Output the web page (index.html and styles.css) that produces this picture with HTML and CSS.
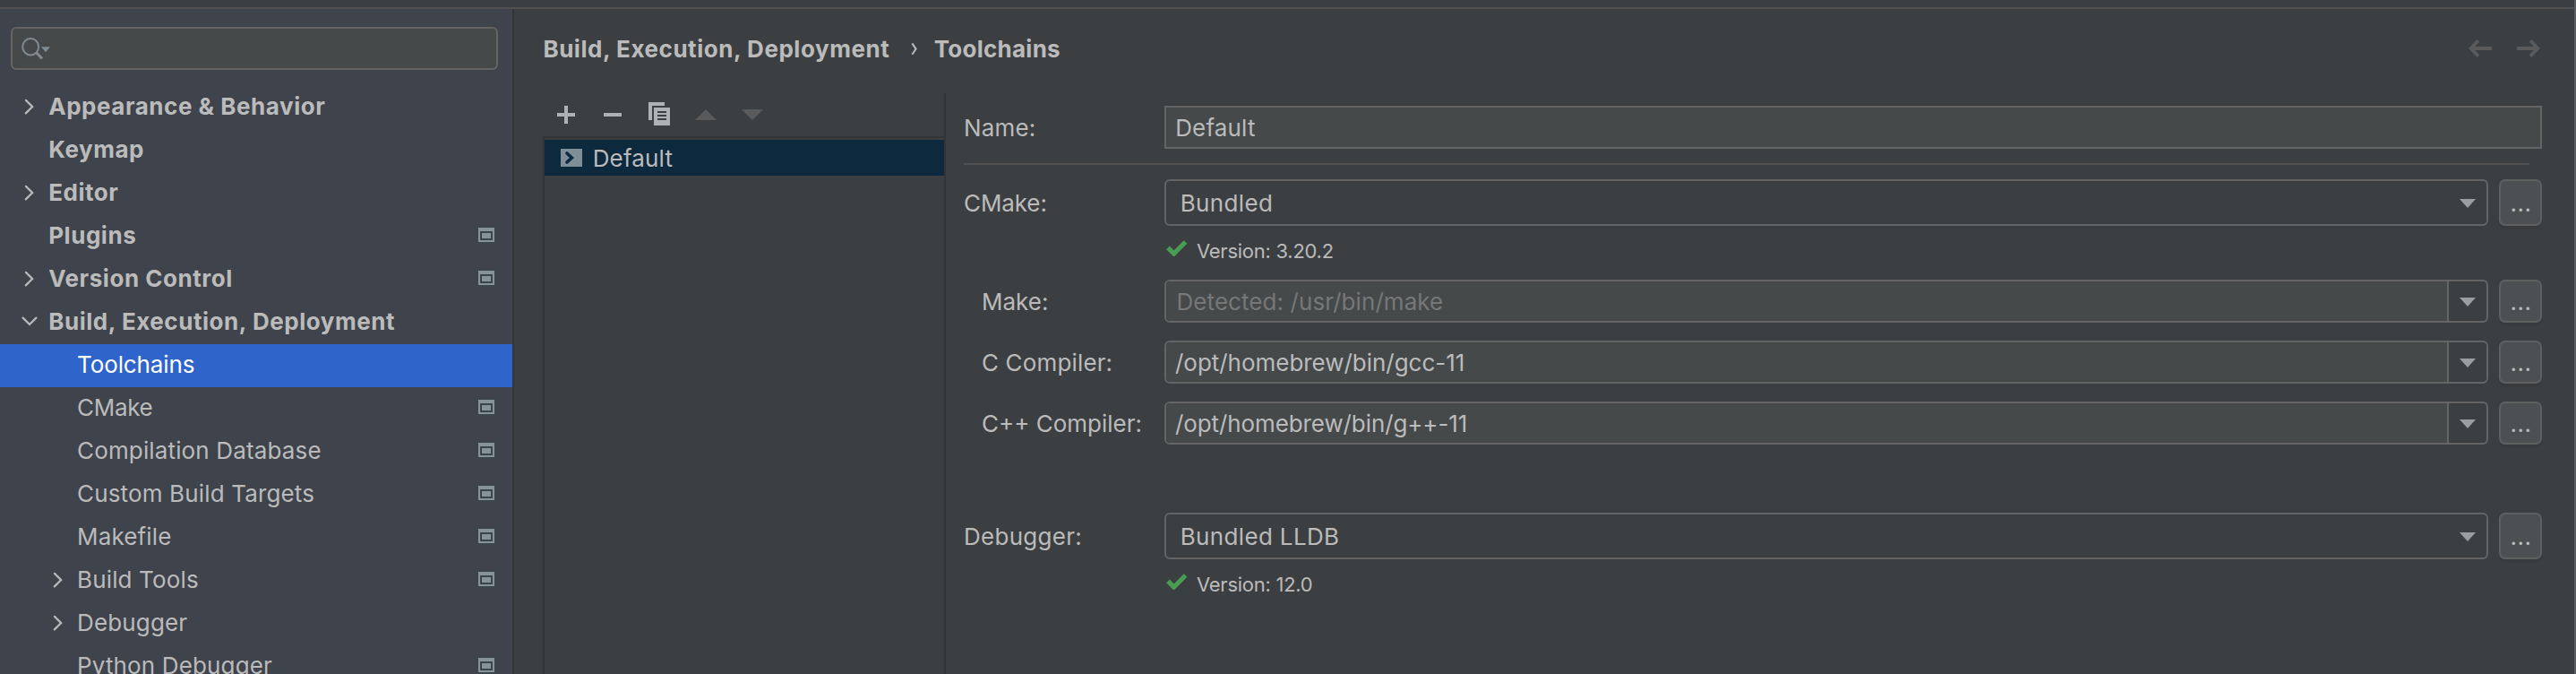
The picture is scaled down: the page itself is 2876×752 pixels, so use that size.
FILE: index.html
```html
<!DOCTYPE html>
<html lang="en">
<head>
<meta charset="utf-8">
<title>Toolchains</title>
<link rel="stylesheet" href="styles.css">
</head>
<body>
<svg class="defs" width="0" height="0">
  <symbol id="right" viewBox="0 0 12 18"><path d="M1.8 1.8 9.2 9.1 1.8 16.4" fill="none" stroke="#bbb" stroke-width="2.2" stroke-linecap="round"/></symbol>
  <symbol id="down" viewBox="0 0 18 12"><path d="M1.6 1.6 9 9 16.4 1.6" fill="none" stroke="#bbb" stroke-width="2.2" stroke-linecap="round"/></symbol>
  <symbol id="project" viewBox="0 0 18 16"><path fill="#87939a" fill-rule="evenodd" d="M0 0H18V16H0zM2 4V14H16V4z"/><path fill="#87939a" d="M4 6H14V12H4z"/></symbol>
  <symbol id="tri" viewBox="0 0 18 10"><path d="M0 0H18L9 10z" fill="#9a9da1"/></symbol>
  <symbol id="check" viewBox="0 0 24 18"><path d="M2 8.4 8.6 15 21.6 2" fill="none" stroke="#499c54" stroke-width="5.2"/></symbol>
</svg>
<div class="titlebar"></div>
<div class="window">
  <nav class="sidebar">
    <div class="search">
      <svg width="34" height="26" viewBox="0 0 34 26"><ellipse cx="10.2" cy="10.2" rx="9" ry="9.2" fill="none" stroke="#7f8b91" stroke-width="2"/><path d="M16.6 16.8 23 23.4" stroke="#7f8b91" stroke-width="3"/><path d="M22 10.2H32L27 16.2z" fill="#7f8b91"/></svg>
    </div>
    <ul class="tree">
      <li class="top"><svg class="chev" width="12" height="18"><use href="#right"/></svg><span>Appearance &amp; Behavior</span></li>
      <li class="top"><span>Keymap</span></li>
      <li class="top"><svg class="chev" width="12" height="18"><use href="#right"/></svg><span>Editor</span></li>
      <li class="top"><span>Plugins</span><svg class="proj" width="18" height="16"><use href="#project"/></svg></li>
      <li class="top"><svg class="chev" width="12" height="18"><use href="#right"/></svg><span>Version Control</span><svg class="proj" width="18" height="16"><use href="#project"/></svg></li>
      <li class="top"><svg class="chev open" width="18" height="12"><use href="#down"/></svg><span>Build, Execution, Deployment</span></li>
      <li class="selected"><span class="tight">Toolchains</span></li>
      <li><span class="tighter">CMake</span><svg class="proj" width="18" height="16"><use href="#project"/></svg></li>
      <li><span>Compilation Database</span><svg class="proj" width="18" height="16"><use href="#project"/></svg></li>
      <li><span>Custom Build Targets</span><svg class="proj" width="18" height="16"><use href="#project"/></svg></li>
      <li><span>Makefile</span><svg class="proj" width="18" height="16"><use href="#project"/></svg></li>
      <li><svg class="chev" width="12" height="18"><use href="#right"/></svg><span>Build Tools</span><svg class="proj" width="18" height="16"><use href="#project"/></svg></li>
      <li><svg class="chev" width="12" height="18"><use href="#right"/></svg><span>Debugger</span></li>
      <li><span>Python Debugger</span><svg class="proj" width="18" height="16"><use href="#project"/></svg></li>
    </ul>
  </nav>
  <main class="content">
    <header class="header">
      <span class="crumb">Build, Execution, Deployment</span>
      <svg class="crumb-sep" width="8" height="16" viewBox="0 0 8 16"><path d="M1.4 1.4 5.6 7.6 1.4 13.8" fill="none" stroke="#bbb" stroke-width="2"/></svg>
      <span class="crumb last">Toolchains</span>
      <div class="nav-arrows">
        <svg width="26" height="20" viewBox="0 0 26 20"><path d="M26 10H3M11 1.4 2.6 10 11 18.6" fill="none" stroke="#5a5a5a" stroke-width="3.8"/></svg>
        <svg width="26" height="20" viewBox="0 0 26 20"><path d="M0 10H23M15 1.4 23.4 10 15 18.6" fill="none" stroke="#5a5a5a" stroke-width="3.8"/></svg>
      </div>
    </header>
    <div class="panes">
      <section class="toolchains">
        <div class="toolbar">
          <svg width="240" height="28" viewBox="0 0 240 28">
            <path fill="#afb1b3" d="M8 4h4v8h8v4h-8v8H8v-8H0v-4h8zM52 12h20v4H52z"/>
            <path fill="#afb1b3" d="M102 0h18v4h-14v16h-4z"/>
            <path fill="#afb1b3" fill-rule="evenodd" d="M108 6h18v20h-18zM112 10v2h10v-2zM112 14v2h10v-2zM112 18v2h10v-2z"/>
            <path fill="#5a5a5a" d="M154 20h24l-12-12zM206 8h24l-12 12z"/>
          </svg>
        </div>
        <div class="list">
          <div class="item">
            <svg width="24" height="20" viewBox="0 0 24 20"><path fill="#7f8f99" d="M0 0h24v20H0z"/><path d="M7 5 12.4 10 7 15" fill="none" stroke="#0d293e" stroke-width="3.6" stroke-linecap="round"/></svg>
            <span>Default</span>
          </div>
        </div>
      </section>
      <section class="form">
        <div class="row"><label>Name:</label><div class="input">Default</div></div>
        <hr>
        <div class="row tall"><label class="tight">CMake:</label><div class="select">Bundled<svg width="18" height="10"><use href="#tri"/></svg></div><button>...</button></div>
        <div class="status"><svg width="24" height="18"><use href="#check"/></svg><span>Version: 3.20.2</span></div>
        <div class="row sub"><label class="none">Make:</label><div class="combo hint"><span>Detected: /usr/bin/make</span><i><svg width="18" height="10"><use href="#tri"/></svg></i></div><button>...</button></div>
        <div class="row sub"><label>C Compiler:</label><div class="combo"><span>/opt/homebrew/bin/gcc-11</span><i><svg width="18" height="10"><use href="#tri"/></svg></i></div><button>...</button></div>
        <div class="row sub"><label class="none">C++ Compiler:</label><div class="combo"><span class="tight">/opt/homebrew/bin/g++-11</span><i><svg width="18" height="10"><use href="#tri"/></svg></i></div><button>...</button></div>
        <div class="row tall debugger"><label class="wide">Debugger:</label><div class="select">Bundled LLDB<svg width="18" height="10"><use href="#tri"/></svg></div><button>...</button></div>
        <div class="status"><svg width="24" height="18"><use href="#check"/></svg><span>Version: 12.0</span></div>
      </section>
    </div>
  </main>
</div>
</body>
</html>
```
FILE: styles.css
```css
* { box-sizing: border-box; }

body {
  margin: 0;
  width: 2876px;
  height: 752px;
  overflow: hidden;
  display: flex;
  flex-direction: column;
  background: #3c3f41;
  border-right: 2px solid #5c5d5e;
  color: #bbb;
  font: 26px/32px Inter, sans-serif;
  letter-spacing: 0.15px;
  white-space: nowrap;
}

svg { display: block; flex: none; }
.defs { position: absolute; }

.titlebar { flex: none; height: 10px; border-bottom: 2px solid #515151; }

.window { flex: 1; min-height: 0; display: flex; }

/* Settings tree */
.sidebar {
  flex: none;
  width: 574px;
  padding-top: 20px;
  background: #3e434c;
  border-right: 2px solid #323435;
  overflow: hidden;
}
.search {
  width: 544px;
  height: 48px;
  margin-left: 12px;
  padding: 10px 0 0 10px;
  background: #45494a;
  border: 2px solid #646464;
  border-radius: 6px;
}
.tree { list-style: none; margin: 18px 0 0; padding: 0; }
.tree li {
  display: grid;
  grid-template-columns: 86px 1fr 18px;
  align-items: center;
  height: 48px;
  padding-right: 20px;
}
.tree li.top { grid-template-columns: 54.2px 1fr 18px; font-weight: 700; letter-spacing: 0.54px; }
.tree span { grid-column: 2; padding-bottom: 3px; }
.tree .chev { grid-column: 1; justify-self: end; margin: 0 15px 2px 0; }
.tree .chev.open { margin: 0 12px 3px 0; }
.tree .proj { grid-column: 3; margin-bottom: 4px; }
.tree .selected { background: #2f65ca; color: #fff; }

.tight { letter-spacing: -0.1px; }
.tighter { letter-spacing: -0.3px; }
.none { letter-spacing: 0; }
.wide { letter-spacing: 0.27px; }

/* Page header */
.content { flex: 1; min-width: 0; display: flex; flex-direction: column; padding-left: 32px; }
.header {
  flex: none;
  height: 94px;
  display: flex;
  align-items: flex-start;
  padding: 29px 38px 0 0.4px;
  font-weight: 700;
  letter-spacing: 0.54px;
}
.crumb-sep { margin: 8px 18px 0 23.5px; }
.crumb.last { letter-spacing: 0.25px; }
.nav-arrows { display: flex; gap: 28px; margin: 5px 0 0 auto; }

.panes { flex: 1; min-height: 0; display: flex; }

/* Toolchain list */
.toolchains { flex: none; width: 450px; border-right: 2px solid #323435; display: flex; flex-direction: column; }
.toolbar { height: 48px; padding: 10px 0 0 16px; }
.list { flex: 1; border: solid #323435; border-width: 2px 0 0 2px; padding-top: 2px; }
.item {
  display: flex;
  align-items: center;
  gap: 11.7px;
  height: 40px;
  padding-left: 18px;
  background: #0d293e;
}
.item span { padding-top: 2px; }

/* Form */
.form { flex: 1; min-width: 0; padding: 14px 36px 0 20px; }
.row {
  display: grid;
  grid-template-columns: 224px 1478px 48px;
  column-gap: 0;
  height: 48px;
}
.row > button { margin-left: 12px; }
.row.tall { height: 52px; }
.row.sub { margin-top: 20px; }
.row.debugger { margin-top: 76px; }
label { align-self: center; padding-top: 1px; }
.sub label { padding-left: 20px; }
hr { margin: 16px 14px 16px 0; height: 2px; border: 0; background: #515151; }

.input, .select, .combo {
  display: flex;
  align-items: center;
  border: 2px solid #646464;
  padding-top: 1px;
}
.input { grid-column: 2 / 4; width: 1538px; padding-left: 10.2px; background: #45494a; }
.select { justify-content: space-between; padding: 1px 12px 0 15.7px; border-radius: 6px; letter-spacing: 0.35px; }
.select svg { margin-top: 1px; }
.combo { padding: 0; align-items: stretch; border-radius: 6px; overflow: hidden; letter-spacing: -0.03px; }
.combo span { flex: 1; display: flex; align-items: center; padding: 1px 0 0 10px; background: #45494a; }
.combo.hint span { padding-left: 11.5px; color: #777; letter-spacing: 0.07px; }
.combo i { width: 44px; border-left: 2px solid #646464; padding: 18px 0 0 12px; }

button {
  width: 48px;
  height: 100%;
  padding: 1px 0 0 1px;
  font: inherit;
  letter-spacing: 0.5px;
  color: #bbb;
  background: #4c5052;
  border: 2px solid #5e6060;
  border-radius: 7px;
  box-shadow: 0 4px 0 -0.5px #383a3c;
}

.status {
  display: flex;
  align-items: center;
  gap: 10px;
  height: 24px;
  margin: 16px 0 20px 226px;
  font-size: 22px;
  letter-spacing: -0.26px;
}
.status svg { margin-bottom: 6px; }
```
